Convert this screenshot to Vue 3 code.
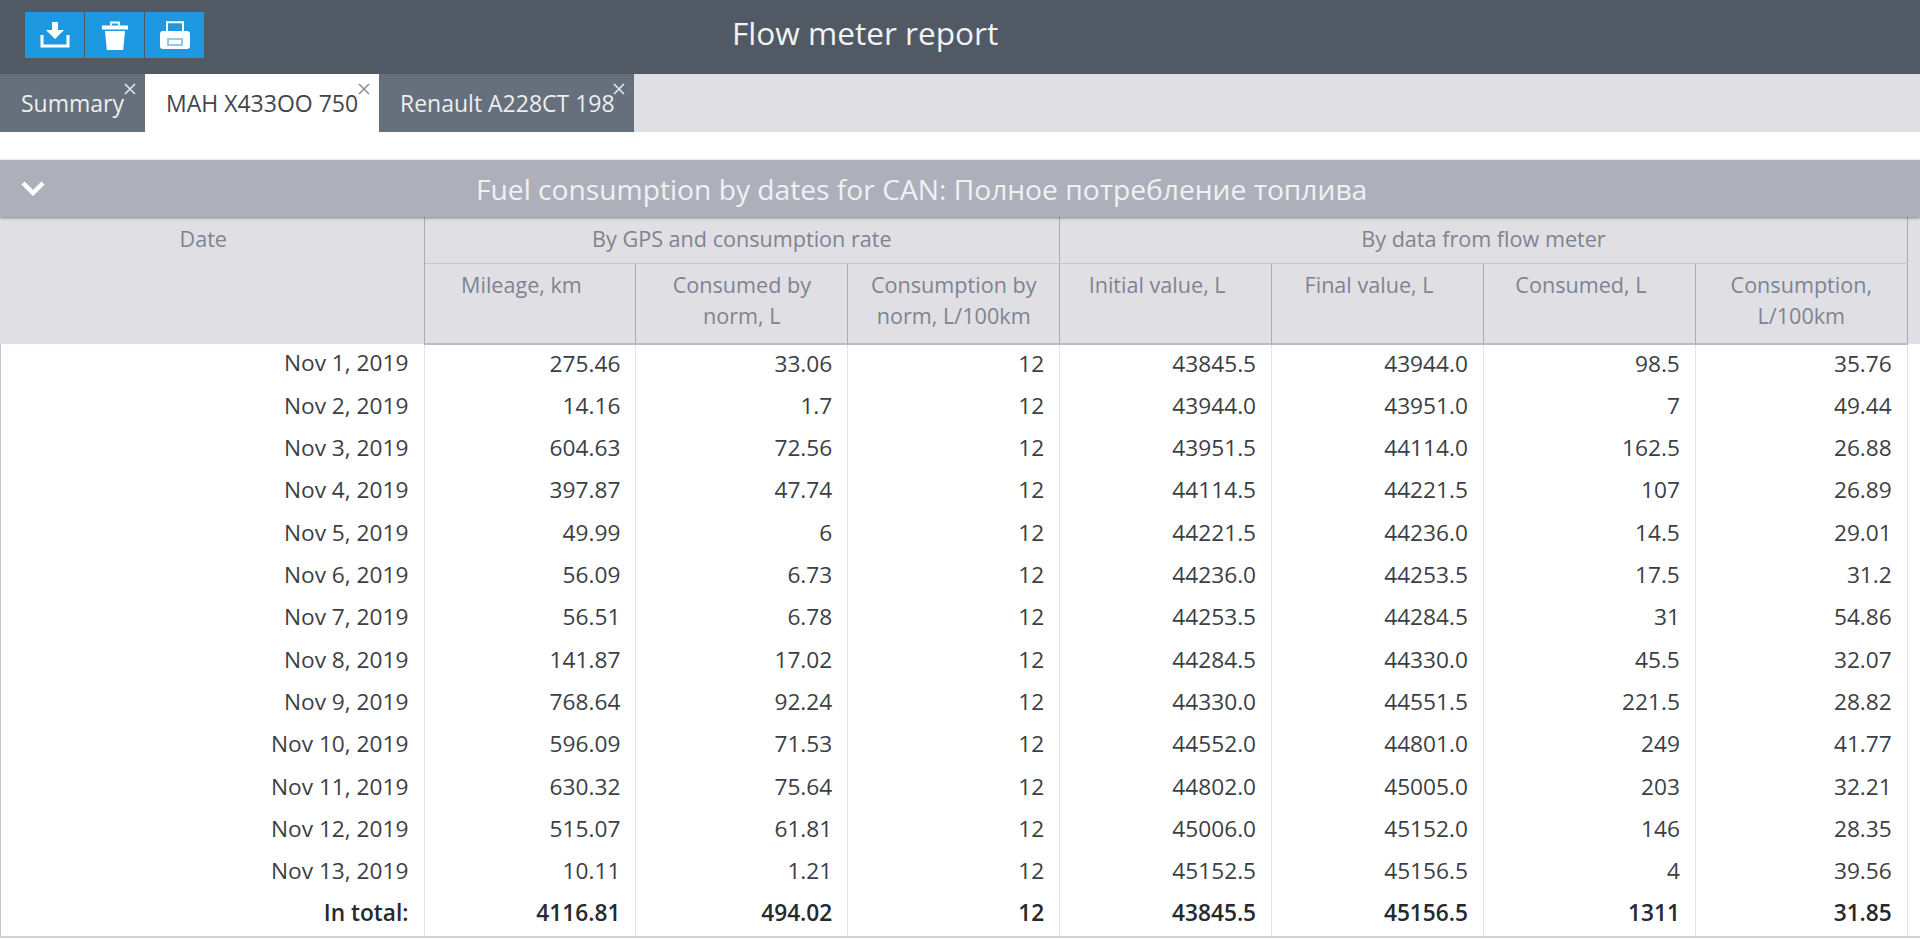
<template>
  <div class="report">
    <header class="topbar">
      <div class="tools">
        <button class="tool" type="button" aria-label="Download">
          <svg viewBox="0 0 30 26" width="30" height="26">
            <path d="M12 0h6v8h6l-9 9-9-9h6z" fill="#fff" />
            <path d="M2 13v11h26V13" fill="none" stroke="#fff" stroke-width="3" />
          </svg>
        </button>
        <button class="tool" type="button" aria-label="Delete">
          <svg viewBox="0 0 26 29" width="26" height="29">
            <path d="M9 4.5V1.5h8v3" fill="none" stroke="#fff" stroke-width="2" />
            <path d="M0 4.5h26v4H0z" fill="#fff" />
            <path d="M3 10h20l-1.8 19H4.8z" fill="#fff" />
          </svg>
        </button>
        <button class="tool" type="button" aria-label="Print">
          <svg viewBox="0 0 30 28" width="30" height="28">
            <path d="M7 10V1.2h16V10" fill="none" stroke="#fff" stroke-width="2" />
            <path d="M3 10h24a3 3 0 0 1 3 3v12a3 3 0 0 1-3 3H3a3 3 0 0 1-3-3V13a3 3 0 0 1 3-3z" fill="#fff" />
            <path d="M8 18h14v6H8z" fill="none" stroke="#6fbcea" stroke-width="1.6" />
          </svg>
        </button>
      </div>
      <h1 class="title">Flow meter report</h1>
    </header>

    <nav class="tabs">
      <div v-for="tab in tabs" :key="tab.name" class="tab" :class="{ active: tab.active }" :style="{ width: tab.width + 'px' }">
        {{ tab.name }}
        <svg class="close" viewBox="0 0 12 12" width="12" height="12">
          <path d="M1 1l10 10M11 1L1 11" fill="none" stroke="currentColor" stroke-width="1.6" />
        </svg>
      </div>
    </nav>

    <section class="panel">
      <div class="panel-head">
        <svg class="chevron" viewBox="0 0 26 16" width="26" height="16">
          <path d="M3 3l10 10L23 3" fill="none" stroke="#fff" stroke-width="4.5" />
        </svg>
        <span class="panel-title">Fuel consumption by dates for CAN: Полное потребление топлива</span>
      </div>

      <table class="grid">
        <colgroup>
          <col class="col-date" />
          <col v-for="n in 7" :key="n" class="col-num" />
          <col />
        </colgroup>
        <thead>
          <tr class="group-row">
            <th rowspan="2" class="single">Date</th>
            <th colspan="3">By GPS and consumption rate</th>
            <th colspan="4">By data from flow meter</th>
            <th rowspan="2" class="gutter"></th>
          </tr>
          <tr class="name-row">
            <th class="single">Mileage, km</th>
            <th>Consumed by<br />norm, L</th>
            <th>Consumption by<br />norm, L/100km</th>
            <th class="single">Initial value, L</th>
            <th class="single">Final value, L</th>
            <th class="single">Consumed, L</th>
            <th>Consumption,<br />L/100km</th>
          </tr>
        </thead>
        <tbody>
          <tr v-for="row in rows" :key="row[0]">
            <td v-for="(cell, i) in row" :key="i">{{ cell }}</td>
            <td class="gutter"></td>
          </tr>
          <tr class="total">
            <td v-for="(cell, i) in total" :key="i">{{ cell }}</td>
            <td class="gutter"></td>
          </tr>
        </tbody>
      </table>
    </section>
  </div>
</template>

<script setup>
const tabs = [
  { name: 'Summary', width: 145 },
  { name: 'MAH X433OO 750', width: 234, active: true },
  { name: 'Renault A228CT 198', width: 255 },
]

const rows = [
  ['Nov 1, 2019', '275.46', '33.06', '12', '43845.5', '43944.0', '98.5', '35.76'],
  ['Nov 2, 2019', '14.16', '1.7', '12', '43944.0', '43951.0', '7', '49.44'],
  ['Nov 3, 2019', '604.63', '72.56', '12', '43951.5', '44114.0', '162.5', '26.88'],
  ['Nov 4, 2019', '397.87', '47.74', '12', '44114.5', '44221.5', '107', '26.89'],
  ['Nov 5, 2019', '49.99', '6', '12', '44221.5', '44236.0', '14.5', '29.01'],
  ['Nov 6, 2019', '56.09', '6.73', '12', '44236.0', '44253.5', '17.5', '31.2'],
  ['Nov 7, 2019', '56.51', '6.78', '12', '44253.5', '44284.5', '31', '54.86'],
  ['Nov 8, 2019', '141.87', '17.02', '12', '44284.5', '44330.0', '45.5', '32.07'],
  ['Nov 9, 2019', '768.64', '92.24', '12', '44330.0', '44551.5', '221.5', '28.82'],
  ['Nov 10, 2019', '596.09', '71.53', '12', '44552.0', '44801.0', '249', '41.77'],
  ['Nov 11, 2019', '630.32', '75.64', '12', '44802.0', '45005.0', '203', '32.21'],
  ['Nov 12, 2019', '515.07', '61.81', '12', '45006.0', '45152.0', '146', '28.35'],
  ['Nov 13, 2019', '10.11', '1.21', '12', '45152.5', '45156.5', '4', '39.56'],
]

const total = ['In total:', '4116.81', '494.02', '12', '43845.5', '45156.5', '1311', '31.85']
</script>

<style>
body {
  background: #fff;
}
</style>

<style scoped>
.report {
  width: 1920px;
  height: 939px;
  overflow: hidden;
  font-family: "Open Sans", "Noto Sans", sans-serif;
  background: #fff;
}

.topbar {
  display: flex;
  align-items: center;
  height: 74px;
  padding: 0 0 4px 25px;
  box-sizing: border-box;
  background: #515a64;
}

.tools {
  display: flex;
  gap: 1px;
  height: 46px;
}

.tool {
  display: flex;
  align-items: center;
  justify-content: center;
  width: 59px;
  padding: 0;
  border: 0;
  background: #1e98e0;
}

.title {
  margin: 0 0 6px 528px;
  font-size: 31.6px;
  font-weight: 400;
  color: #f2f3f4;
}

.tabs {
  display: flex;
  height: 58px;
  background: #e0e0e4;
}

.tab {
  position: relative;
  box-sizing: border-box;
  padding: 11px 0 0 21px;
  font-size: 23px;
  line-height: 36px;
  color: #eceef0;
  background: #66707c;
}

.tab.active {
  color: #41464d;
  background: #fff;
}

.close {
  position: absolute;
  top: 9px;
  right: 9px;
  color: #e6e8ea;
}

.tab.active .close {
  color: #8a8f98;
}

.panel {
  margin-top: 28px;
}

.panel-head {
  position: relative;
  display: flex;
  align-items: center;
  height: 57px;
  background: #adb0ba;
  box-shadow: 0 1px 3px rgba(60, 65, 75, 0.6);
}

.chevron {
  margin: 0 0 2px 20px;
}

.panel-title {
  margin-left: 430px;
  font-size: 28.2px;
  color: #f0f1f3;
}

.grid {
  width: 1920px;
  border-collapse: collapse;
  table-layout: fixed;
  font-size: 22.7px;
}

.col-date {
  width: 424px;
}

.col-num {
  width: 211.9px;
}

th {
  padding: 0;
  font-size: 21.6px;
  font-weight: 500;
  line-height: 31.5px;
  vertical-align: top;
  color: #7f8390;
  background: #e0e0e4;
  border-right: 1px solid #a9adb7;
}

.group-row th {
  height: 46px;
  padding-top: 6px;
  box-sizing: border-box;
  border-bottom: 1px solid #c4c6cd;
}

.group-row th.single,
.group-row th.gutter {
  border-bottom: 0;
}

.name-row th {
  height: 81px;
  padding-top: 5px;
  box-sizing: border-box;
  border-bottom: 2px solid #b9bcc5;
}

th.single {
  padding-right: 17px;
}

th.gutter {
  border-right: 0;
  border-bottom: 2px solid #b9bcc5;
}

td {
  height: 42.35px;
  padding: 0 15px 4px 0;
  box-sizing: border-box;
  line-height: 30px;
  text-align: right;
  color: #3b3f45;
  border-right: 1px solid #e3e3e6;
}

td:first-child {
  box-shadow: inset 1px 0 #c6c6cb;
}

td.gutter {
  padding: 0;
  border-right: 0;
}

.total td {
  font-weight: 600;
  color: #26292d;
  border-bottom: 2px solid #d2d2d6;
}
</style>
